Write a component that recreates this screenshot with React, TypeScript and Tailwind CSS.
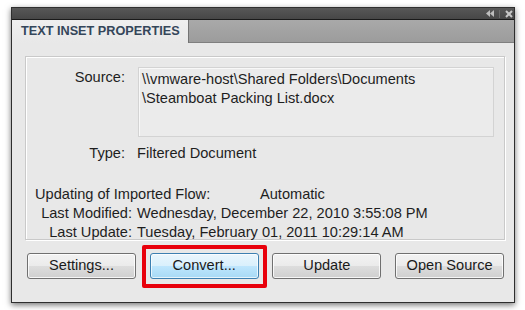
import React from "react";

const font = { fontFamily: '"Liberation Sans", Arial, sans-serif' };

function Btn({ label, hover }: { label: string; hover?: boolean }) {
  return (
    <div
      className={
        "relative w-[109px] h-[26px] rounded-[3px] border flex items-center justify-center text-[14.6px] text-[#1a1a1a] " +
        (hover
          ? "border-[#3c7fb1] bg-[linear-gradient(#eaf6fd_0%,#d9f0fc_50%,#bee6fd_51%,#a7d9f5_100%)] shadow-[inset_0_0_0_1px_rgba(255,255,255,0.7)]"
          : "border-[#707070] bg-[linear-gradient(#f2f2f2_0%,#ebebeb_50%,#dddddd_51%,#cfcfcf_100%)] shadow-[inset_0_0_0_1px_rgba(255,255,255,0.8)]")
      }
    >
      {label}
    </div>
  );
}

export default function App() {
  return (
    <div className="w-[525px] h-[310px] bg-white pt-[7px] pl-[11px]" style={font}>
      <div className="w-[504px] h-[296px] border border-[#2e2e2e] flex flex-col shadow-[0_2px_6px_rgba(0,0,0,0.55)] bg-[#e8e8e8]">
        {/* title bar */}
        <div className="h-[12px] bg-[linear-gradient(#575757,#474747)] border-b border-[#1a1a1a] flex items-center justify-end pr-[1px] gap-[5px]">
          <svg width="8" height="7" viewBox="0 0 8 7">
            <path d="M4 0 L0 3.5 L4 7 Z" fill="#bdbdbd" />
            <path d="M8 0 L4 3.5 L8 7 Z" fill="#bdbdbd" />
          </svg>
          <div className="w-px h-[8px] bg-[#6a6a6a]" />
          <svg width="8" height="8" viewBox="0 0 8 8">
            <path d="M1 1 L7 7 M7 1 L1 7" stroke="#c8c8c8" strokeWidth="2" />
          </svg>
        </div>
        {/* tab bar */}
        <div className="h-[23px] bg-[linear-gradient(#a9a9a9,#9c9c9c)] border-b border-[#7f7f7f] flex items-end">
          <div className="mt-[1px] h-[23px] -mb-px w-[177px] bg-[linear-gradient(#efefef,#e8e8e8)] border-r border-[#747474] flex items-center pl-[9px]">
            <span className="text-[12.7px] font-bold text-[#34465a]">TEXT INSET PROPERTIES</span>
          </div>
        </div>
        {/* content */}
        <div className="flex-1 flex flex-col pt-[13px] text-[14.6px] text-[#1e1e1e]">
          <div className="ml-[13px] w-[480px] h-[184px] border border-[#c9c9c9] shadow-[inset_1px_1px_0_#ffffff,1px_1px_0_#ffffff] flex flex-col">
            <div className="flex mt-[10px]">
              <div className="w-[99px] text-right leading-[18px] pt-[1px]">Source:</div>
              <div className="ml-[13px] w-[356px] h-[70px] border border-[#d3d3d3] bg-[#ebebeb] shadow-[inset_1px_1px_0_#f8f8f8] pl-[3px] pt-[2px] leading-[19px]">
                <div>\\vmware-host\Shared Folders\Documents</div>
                <div>\Steamboat Packing List.docx</div>
              </div>
            </div>
            <div className="flex mt-[7px] leading-[18px]">
              <div className="w-[99px] text-right">Type:</div>
              <div className="ml-[12px]">Filtered Document</div>
            </div>
            <div className="mt-[23px] flex flex-col leading-[19px]">
              <div className="flex pl-[9px]">
                <span className="w-[225px]">Updating of Imported Flow:</span>
                <span>Automatic</span>
              </div>
              <div className="flex">
                <span className="w-[106px] text-right">Last Modified:</span>
                <span className="ml-[5px]">Wednesday, December 22, 2010 3:55:08 PM</span>
              </div>
              <div className="flex">
                <span className="w-[106px] text-right">Last Update:</span>
                <span className="ml-[5px]">Tuesday, February 01, 2011 10:29:14 AM</span>
              </div>
            </div>
          </div>
          <div className="mt-[13px] pl-[15px] flex gap-[13.7px]">
            <Btn label="Settings..." />
            <div className="relative">
              <Btn label="Convert..." hover />
              <div className="absolute left-[-8px] top-[-8px] w-[125px] h-[43px] border-4 border-[#e8000b] rounded-[2px]" />
            </div>
            <Btn label="Update" />
            <Btn label="Open Source" />
          </div>
        </div>
      </div>
    </div>
  );
}
